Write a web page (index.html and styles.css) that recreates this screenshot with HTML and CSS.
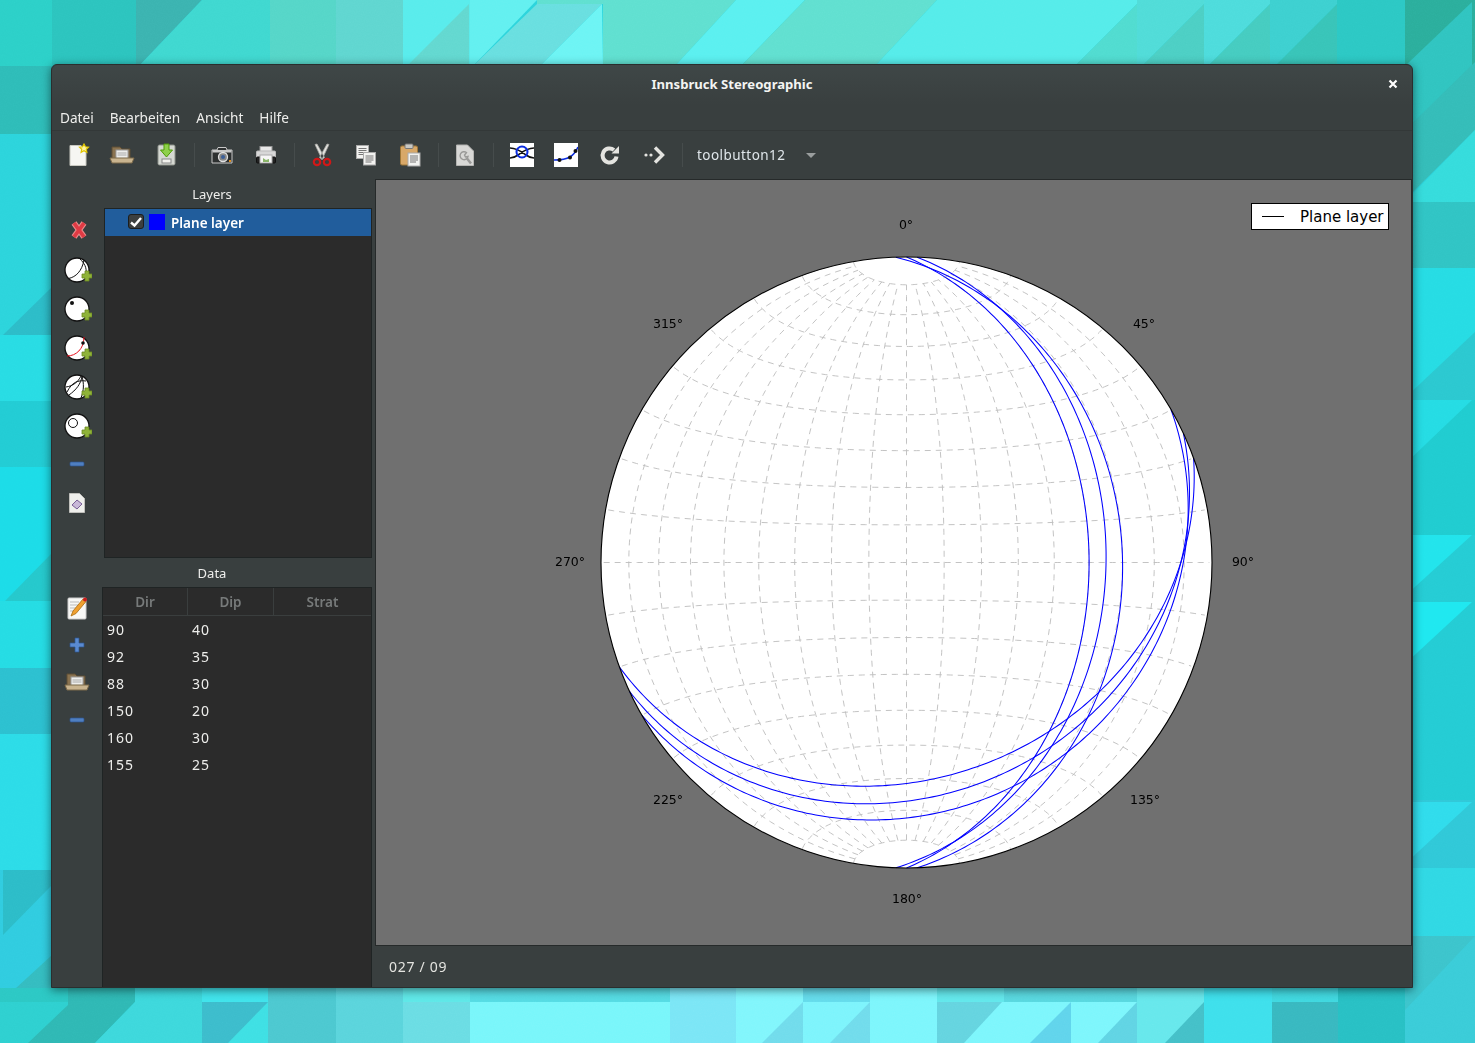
FILE: index.html
```html
<!DOCTYPE html>
<html lang="en">
<head>
    <meta charset="UTF-8">
    <meta name="viewport" content="width=device-width, initial-scale=1.0">
    <title>Innsbruck Stereographic</title>
    <link rel="stylesheet" href="styles.css">
</head>
<body>
    <!-- desktop wallpaper, only the strips around the window are visible -->
    <svg class="wallpaper" viewBox="0 0 1475 1043" width="1475" height="1043">
        <defs>
            <filter id="grain" x="0" y="0" width="100%" height="100%">
                <feTurbulence type="fractalNoise" baseFrequency="0.9" numOctaves="2" seed="4"/>
                <feColorMatrix type="saturate" values="0"/>
            </filter>
        </defs>
        <rect width="1475" height="1043" fill="#2cd4dc"/>
        <!-- top -->
        <polygon fill="#2cc4be" points="0,0 136,0 136,66 0,66"/>
        <polygon fill="#3bb3b0" points="136,0 202,0 139,66 136,66"/>
        <polygon fill="#3fd8d0" points="202,0 270,0 270,66 139,66"/>
        <polygon fill="#55d6c8" points="270,0 336,0 336,66 270,66"/>
        <polygon fill="#5fd6d0" points="336,0 403,0 403,66 336,66"/>
        <polygon fill="#58ecec" points="403,0 470,0 470,66 403,66"/>
        <polygon fill="#62d8d0" points="407,66 469,4 469,66"/>
        <polygon fill="#62f0f0" points="470,0 537,0 473,66 470,66"/>
        <polygon fill="#68dfe0" points="473,66 537,4 602,4 540,66"/>
        <polygon fill="#6cf4f4" points="540,66 602,4 603,66"/>
        <polygon fill="#5fe0d0" points="537,0 736,0 675,66 603,66 603,4 537,4"/>
        <polygon fill="#5af0f0" points="675,66 736,0 805,0 741,66"/>
        <polygon fill="#60e0d0" points="741,66 805,0 937,0 875,66"/>
        <polygon fill="#55ecea" points="875,66 937,0 1137,0 1137,4 1075,66"/>
        <polygon fill="#50dcd0" points="1075,66 1137,4 1137,66"/>
        <polygon fill="#50dcd8" points="1137,0 1204,0 1204,4 1142,66 1137,66"/>
        <polygon fill="#4ccfc4" points="1142,66 1204,4 1204,66"/>
        <polygon fill="#4ddcdc" points="1204,0 1270,0 1270,4 1208,66 1204,66"/>
        <polygon fill="#45ccc0" points="1208,66 1270,4 1270,66"/>
        <polygon fill="#3dd0d0" points="1270,0 1337,0 1337,4 1275,66 1270,66"/>
        <polygon fill="#38c4b8" points="1275,66 1337,4 1337,66"/>
        <polygon fill="#2cc8c4" points="1337,0 1405,0 1405,66 1337,66"/>
        <!-- right -->
        <rect fill="#2bae9c" x="1405" y="0" width="70" height="90"/>
        <polygon fill="#30c4c0" points="1405,66 1472,2 1472,66 1405,130"/>
        <polygon fill="#34bcb8" points="1405,130 1475,62 1475,130 1405,200"/>
        <polygon fill="#35dcdc" points="1405,202 1475,130 1475,202"/>
        <rect fill="#30c4c4" x="1405" y="202" width="70" height="66"/>
        <rect fill="#26dce4" x="1405" y="268" width="70" height="132"/>
        <polygon fill="#2bc8d0" points="1405,398 1475,332 1475,400 1405,400"/>
        <rect fill="#20ccd0" x="1405" y="400" width="70" height="135"/>
        <polygon fill="#25dce4" points="1405,400 1472,400 1405,464"/>
        <rect fill="#25ccd4" x="1405" y="535" width="70" height="67"/>
        <polygon fill="#22e4ec" points="1405,535 1472,535 1405,596"/>
        <rect fill="#24ccd4" x="1405" y="602" width="70" height="198"/>
        <polygon fill="#1fe8f0" points="1405,602 1472,602 1405,664"/>
        <rect fill="#30c8d8" x="1405" y="800" width="70" height="68"/>
        <polygon fill="#30dcec" points="1405,802 1472,802 1405,864"/>
        <rect fill="#30d8e4" x="1405" y="868" width="70" height="68"/>
        <rect fill="#3cc4cc" x="1405" y="936" width="70" height="107"/>
        <polygon fill="#3accd8" points="1405,1010 1475,936 1475,1043 1405,1043"/>
        <!-- left -->
        <rect fill="#2cd0c8" x="0" y="0" width="52" height="66"/>
        <rect fill="#2ebcb8" x="0" y="66" width="52" height="68"/>
        <rect fill="#2cd4dc" x="0" y="134" width="52" height="201"/>
        <polygon fill="#2cbcc8" points="3,335 52,287 52,335"/>
        <rect fill="#28dce4" x="0" y="335" width="52" height="66"/>
        <rect fill="#22ccd4" x="0" y="401" width="52" height="66"/>
        <rect fill="#1cdce8" x="0" y="467" width="52" height="134"/>
        <polygon fill="#25c8cc" points="5,601 52,553 52,601"/>
        <rect fill="#25dce4" x="0" y="601" width="52" height="67"/>
        <rect fill="#2cc0d0" x="0" y="668" width="52" height="66"/>
        <rect fill="#2cdce8" x="0" y="734" width="52" height="136"/>
        <rect fill="#30cce0" x="0" y="870" width="52" height="132"/>
        <polygon fill="#2cbcc8" points="3,870 52,870 52,885 3,935"/>
        <polygon fill="#34bcc0" points="3,1000 52,955 68,955 68,1002"/>
        <!-- bottom -->
        <rect fill="#2cc8c4" x="0" y="988" width="68" height="14"/>
        <rect fill="#2ed0d0" x="0" y="1002" width="68" height="41"/>
        <rect fill="#2ed0d0" x="68" y="1002" width="40" height="41"/>
        <polygon fill="#2fb8b4" points="28,1043 68,1005 68,988 135,988 135,1002 95,1043"/>
        <polygon fill="#3dd8dc" points="95,1043 135,1002 135,988 202,988 202,1043"/>
        <rect fill="#40e4ec" x="202" y="988" width="66" height="14"/>
        <rect fill="#3cbccc" x="202" y="1002" width="66" height="41"/>
        <polygon fill="#3ee0e4" points="228,1043 268,1002 268,1043"/>
        <rect fill="#4cc8d0" x="268" y="988" width="68" height="55"/>
        <rect fill="#5ad4dc" x="336" y="988" width="67" height="55"/>
        <rect fill="#6adde4" x="403" y="1002" width="67" height="41"/>
        <rect fill="#5ee8e8" x="403" y="988" width="67" height="14"/>
        <rect fill="#55dce4" x="470" y="988" width="200" height="14"/>
        <rect fill="#78f6fa" x="470" y="1002" width="200" height="41"/>
        <rect fill="#7ae6f6" x="670" y="988" width="66" height="55"/>
        <rect fill="#80f6fc" x="736" y="988" width="67" height="55"/>
        <polygon fill="#70dcec" points="762,1043 803,1002 803,1043"/>
        <rect fill="#64dcec" x="803" y="988" width="67" height="14"/>
        <rect fill="#7cf4fc" x="803" y="1002" width="67" height="41"/>
        <polygon fill="#70dcec" points="830,1043 870,1002 870,1043"/>
        <rect fill="#7cf6fc" x="870" y="988" width="67" height="55"/>
        <rect fill="#62e8ec" x="937" y="988" width="67" height="14"/>
        <rect fill="#64d4e0" x="937" y="1002" width="67" height="41"/>
        <rect fill="#58d8e0" x="1004" y="988" width="133" height="14"/>
        <polygon fill="#7cf6fc" points="964,1043 1002,1002 1137,1002 1137,1043"/>
        <polygon fill="#60d4ec" points="1030,1043 1071,1002 1071,1043"/>
        <polygon fill="#60d4e4" points="1098,1043 1137,1002 1137,1043"/>
        <rect fill="#66e8ec" x="1137" y="988" width="67" height="55"/>
        <polygon fill="#44c0c8" points="1165,1043 1204,1002 1204,1043"/>
        <rect fill="#3ee0ec" x="1204" y="988" width="68" height="55"/>
        <rect fill="#38b8c0" x="1272" y="1002" width="66" height="41"/>
        <rect fill="#40d8e0" x="1272" y="988" width="66" height="14"/>
        <rect fill="#28c0c4" x="1338" y="988" width="67" height="55"/>
        <rect class="grain" width="1475" height="1043" filter="url(#grain)"/>
    </svg>

    <svg class="defs" width="0" height="0">
        <defs>
            <symbol id="plus-badge" viewBox="0 0 28 28">
                <path d="M18 17h3v-3h4v3h3v4h-3v3h-4v-3h-3z" fill="#8fb339" stroke="#6d8a22" stroke-width="0.8"/>
            </symbol>
            <symbol id="folder" viewBox="0 0 26 24">
                <path d="M3 4h8l2 2h8v10H3z" fill="#8a7350" stroke="#5f4e34"/>
                <rect x="7" y="7" width="12" height="9" fill="#eeeeec" stroke="#999"/>
                <path d="M8.500 10h9M8.500 12h9" stroke="#aaa"/>
                <path d="M1 15h24l-2 5H3z" fill="#c9b48f" stroke="#7d6a4a"/>
            </symbol>
            <symbol id="minus" viewBox="0 0 20 20">
                <rect x="3" y="8" width="14" height="4" rx="1" fill="#4f7fc0" stroke="#2c5590" stroke-width="0.7"/>
            </symbol>
        </defs>
    </svg>

    <div class="window">
        <div class="titlebar">
            <span class="title">Innsbruck Stereographic</span>
            <svg class="close" width="10" height="10" viewBox="0 0 10 10"><path d="M1.500 1.500l7 7M8.500 1.500l-7 7" stroke="#fff" stroke-width="2.200"/></svg>
        </div>
        <div class="menubar">
            <span>Datei</span>
            <span>Bearbeiten</span>
            <span>Ansicht</span>
            <span>Hilfe</span>
        </div>
        <div class="toolbar">
            <div class="tool"><svg width="24" height="24" viewBox="0 0 24 24">
                <path d="M4 2.500h11l5 5v15H4z" fill="#f6f6f2" stroke="#c8c8c0"/>
                <path d="M18 1l1.500 2.800 3 .4-2.200 2.100.6 3-2.900-1.500-2.900 1.500.6-3-2.200-2.100 3-.4z" fill="#fff4a0" stroke="#e0c400" stroke-width="1.200"/>
            </svg></div>
            <div class="tool"><svg width="26" height="24" viewBox="0 0 26 24"><use href="#folder"/></svg></div>
            <div class="tool"><svg width="24" height="24" viewBox="0 0 24 24">
                <rect x="4" y="2" width="17" height="20" rx="1.500" fill="#d5d8d2" stroke="#8d918a"/>
                <rect x="8" y="16" width="9" height="4" fill="#f2f2ee" stroke="#888"/>
                <path d="M10 1h5v6h3.500l-6 7-6-7H10z" fill="#8ed04a" stroke="#4e9a06"/>
            </svg></div>
            <div class="sep"></div>
            <div class="tool"><svg width="24" height="24" viewBox="0 0 24 24">
                <path d="M2 7h5l1-2.500h8l1 2.500h5v13H2z" fill="#2e3131" stroke="#c8c8c8"/>
                <rect x="2.500" y="7" width="19" height="2.500" fill="#c8c8c8"/>
                <circle cx="13" cy="14" r="4.500" fill="#888" stroke="#e2e2e2" stroke-width="1.300"/>
                <circle cx="13" cy="14" r="2" fill="#3b5f99"/>
                <rect x="19" y="17" width="2" height="2" fill="#e09020"/>
            </svg></div>
            <div class="tool"><svg width="24" height="24" viewBox="0 0 24 24">
                <rect x="6" y="3.500" width="12" height="5" fill="#e8e8e8" stroke="#999"/>
                <rect x="2.500" y="8" width="19" height="8" rx="1" fill="#d8d8d8" stroke="#bbb"/>
                <rect x="2.500" y="14" width="19" height="6" rx="1" fill="#222" stroke="#111"/>
                <rect x="6" y="12" width="12" height="8" fill="#f6f6f6" stroke="#aaa"/>
                <path d="M9 15l3 2 3-1v3H9z" fill="#8ab56a"/>
            </svg></div>
            <div class="sep"></div>
            <div class="tool"><svg width="20" height="24" viewBox="0 0 20 24">
                <path d="M3 1.500L5 1l7.500 13.500-2.500 2zM17 1.500L15 1 7.500 14.500l2.500 2z" fill="#e2e2de" stroke="#a8a8a4" stroke-width="0.800"/>
                <circle cx="5" cy="19" r="3.200" fill="none" stroke="#d01818" stroke-width="2.200"/>
                <circle cx="15" cy="19" r="3.200" fill="none" stroke="#d01818" stroke-width="2.200"/>
            </svg></div>
            <div class="tool"><svg width="22" height="22" viewBox="0 0 22 22">
                <rect x="1.500" y="1.500" width="12" height="13" fill="#f2f2f0" stroke="#aaa"/>
                <path d="M3.500 4.500h8M3.500 6.500h8M3.500 8.500h8M3.500 10.500h6" stroke="#777"/>
                <rect x="8.500" y="8.500" width="12" height="12.500" fill="#f2f2f0" stroke="#aaa"/>
                <path d="M10.500 12h8M10.500 14h8M10.500 16h8M10.500 18h6" stroke="#777"/>
            </svg></div>
            <div class="tool"><svg width="22" height="24" viewBox="0 0 22 24">
                <rect x="1.500" y="3" width="17" height="19" rx="1.500" fill="#d8a868" stroke="#a07838"/>
                <rect x="6" y="1" width="8" height="4.500" rx="1" fill="#c8c8c4" stroke="#777"/>
                <rect x="9" y="10" width="12" height="13" fill="#f2f2f0" stroke="#aaa"/>
                <path d="M11 13h8M11 15h8M11 17h8M11 19h6" stroke="#777"/>
            </svg></div>
            <div class="sep sep-short"></div>
            <div class="tool"><svg width="22" height="24" viewBox="0 0 22 24">
                <path d="M2.500 2h11l6 6v14.500h-17z" fill="#d8d8d6" stroke="#b4b4b2"/>
                <path d="M12.500 9.500a4 4 0 1 0 1.500 4l-2.500 .5-1-2z" fill="none" stroke="#9a9a98" stroke-width="1.400"/>
                <path d="M13 15.500l4 5" stroke="#9a9a98" stroke-width="2.500"/>
            </svg></div>
            <div class="sep sep-wide"></div>
            <div class="tool"><svg width="24" height="24" viewBox="0 0 24 24">
                <rect width="24" height="24" fill="#fff"/>
                <path d="M0 5c7 0 12 4 16 7s6 3 8 3M0 15c2 0 4 0 8-3s9-7 16-7" fill="none" stroke="#111" stroke-width="1.700"/>
                <circle cx="12" cy="9" r="5.500" fill="none" stroke="#0a2ce0" stroke-width="2"/>
            </svg></div>
            <div class="tool"><svg width="24" height="24" viewBox="0 0 24 24">
                <rect width="24" height="24" fill="#fff"/>
                <path d="M0 17c6 0 11 0 16-3s6-6 8-10" fill="none" stroke="#0a2ce0" stroke-width="1.600"/>
                <circle cx="5.500" cy="17" r="2" fill="#111"/>
                <circle cx="16" cy="14.500" r="2" fill="#111"/>
                <circle cx="21.500" cy="8" r="2" fill="#111"/>
            </svg></div>
            <div class="tool"><svg width="22" height="22" viewBox="0 0 22 22">
                <path d="M17.500 12.500a7 7 0 1 1-2.500-6.500" fill="none" stroke="#e4e4e0" stroke-width="4"/>
                <path d="M12.500 9.500h7.500V2z" fill="#e4e4e0"/>
            </svg></div>
            <div class="tool"><svg width="22" height="18" viewBox="0 0 22 18">
                <circle cx="3" cy="9" r="1.600" fill="#e4e4e0"/>
                <circle cx="8" cy="9" r="1.600" fill="#e4e4e0"/>
                <path d="M12 1.500L19.500 9 12 16.500" fill="none" stroke="#e4e4e0" stroke-width="3.400"/>
            </svg></div>
            <div class="sep"></div>
            <div class="tool-combo">
                <span>toolbutton12</span>
                <i class="caret"></i>
            </div>
        </div>

        <div class="main">
            <div class="dock">
                <div class="dock-title">Layers</div>
                <div class="dock-row layers-row">
                    <div class="side-tools layer-tools">
                        <div class="side-btn"><svg class="remove" width="20" height="20" viewBox="0 0 20 20">
                            <path d="M5 3l10 14M15 3L5 17" stroke="#e88a8a" stroke-width="6"/>
                            <path d="M5 3l10 14M15 3L5 17" stroke="#e03a44" stroke-width="3.800"/>
                        </svg></div>
                        <div class="side-btn"><svg class="net" width="28" height="28" viewBox="0 0 28 28">
                            <circle cx="13" cy="13" r="12" fill="#fff" stroke="#111" stroke-width="1.300"/>
                            <path d="M4.500 21.500C12 20 18 14 20 3M16 2c4 4 7 8 6 15" fill="none" stroke="#111"/>
                            <use href="#plus-badge" width="28" height="28"/>
                        </svg></div>
                        <div class="side-btn"><svg class="net" width="28" height="28" viewBox="0 0 28 28">
                            <circle cx="13" cy="13" r="12" fill="#fff" stroke="#111" stroke-width="1.300"/>
                            <circle cx="8" cy="7" r="2" fill="#111"/>
                            <use href="#plus-badge" width="28" height="28"/>
                        </svg></div>
                        <div class="side-btn"><svg class="net" width="28" height="28" viewBox="0 0 28 28">
                            <circle cx="13" cy="13" r="12" fill="#fff" stroke="#111" stroke-width="1.300"/>
                            <path d="M3 21C12 21 20 14 20 2" fill="none" stroke="#e8101c"/>
                            <circle cx="19" cy="8" r="1.800" fill="#111"/>
                            <use href="#plus-badge" width="28" height="28"/>
                        </svg></div>
                        <div class="side-btn"><svg class="net" width="28" height="28" viewBox="0 0 28 28">
                            <circle cx="13" cy="13" r="12" fill="#fff" stroke="#111" stroke-width="1.300"/>
                            <path d="M2 13C9 12 14 8 17 2M5 21C12 16 17 10 18 2M3 18C8 8 14 6 22 7M18 2c2 8 2 14-1 22" fill="none" stroke="#111"/>
                            <use href="#plus-badge" width="28" height="28"/>
                        </svg></div>
                        <div class="side-btn"><svg class="net" width="28" height="28" viewBox="0 0 28 28">
                            <circle cx="13" cy="13" r="12" fill="#fff" stroke="#111" stroke-width="1.300"/>
                            <circle cx="9" cy="10" r="4.500" fill="none" stroke="#111"/>
                            <use href="#plus-badge" width="28" height="28"/>
                        </svg></div>
                        <div class="side-btn"><svg width="20" height="20" viewBox="0 0 20 20"><use href="#minus"/></svg></div>
                        <div class="side-btn"><svg width="20" height="22" viewBox="0 0 20 22">
                            <path d="M2.500 1.500h10l5 5v14h-15z" fill="#efefec" stroke="#c0c0bc"/>
                            <path d="M10 8l5 4-5 5-5-4z" fill="#c9b8d8" stroke="#7a5f96"/>
                        </svg></div>
                    </div>
                    <div class="layer-list">
                        <div class="layer-row">
                            <span class="check"><svg width="14" height="12" viewBox="0 0 14 12"><path d="M2 6.500l3.500 3L12 2" fill="none" stroke="#fff" stroke-width="2.400"/></svg></span>
                            <span class="swatch"></span>
                            <span class="layer-name">Plane layer</span>
                        </div>
                    </div>
                </div>
                <div class="dock-title">Data</div>
                <div class="dock-row data-row">
                    <div class="side-tools data-tools">
                        <div class="side-btn"><svg width="24" height="24" viewBox="0 0 24 24">
                            <rect x="3" y="2" width="18" height="21" rx="1" fill="#f8f8f6" stroke="#ccc"/>
                            <path d="M5 6h9M5 9h8M5 12h6M5 15h4" stroke="#bbb"/>
                            <path d="M6 20l2-5L18 3l3 2.500L11 17.500z" fill="#f0a030" stroke="#a86c10" stroke-width="0.800"/>
                            <circle cx="20" cy="3.500" r="2" fill="#c81c1c"/>
                        </svg></div>
                        <div class="side-btn"><svg width="20" height="20" viewBox="0 0 20 20">
                            <path d="M8 3h4v5h5v4h-5v5H8v-5H3V8h5z" fill="#5a8ad0" stroke="#2c5590" stroke-width="0.700"/>
                        </svg></div>
                        <div class="side-btn"><svg width="26" height="24" viewBox="0 0 26 24"><use href="#folder"/></svg></div>
                        <div class="side-btn"><svg width="20" height="20" viewBox="0 0 20 20"><use href="#minus"/></svg></div>
                    </div>
                    <div class="data-table">
                        <div class="data-head">
                            <span>Dir</span>
                            <span>Dip</span>
                            <span>Strat</span>
                        </div>
                        <div class="data-line"><span>90</span><span>40</span></div>
                        <div class="data-line"><span>92</span><span>35</span></div>
                        <div class="data-line"><span>88</span><span>30</span></div>
                        <div class="data-line"><span>150</span><span>20</span></div>
                        <div class="data-line"><span>160</span><span>30</span></div>
                        <div class="data-line"><span>155</span><span>25</span></div>
                    </div>
                </div>
            </div>

            <div class="plot-side">
                <div class="plot">
                    <svg id="net" class="net-plot" viewBox="376 180 1035 765" width="1035" height="765">
                        <text class="tick" x="906" y="229">0°</text>
                        <text class="tick" x="1144" y="328">45°</text>
                        <text class="tick" x="1243" y="566">90°</text>
                        <text class="tick" x="1145" y="804">135°</text>
                        <text class="tick" x="907" y="903">180°</text>
                        <text class="tick" x="668" y="804">225°</text>
                        <text class="tick" x="570" y="566">270°</text>
                        <text class="tick" x="668" y="328">315°</text>
                    </svg>
                    <div class="legend">
                        <span class="legend-line"></span>
                        <span>Plane layer</span>
                    </div>
                </div>
                <div class="statusbar">027 / 09</div>
            </div>
        </div>
    </div>

    <script src="stereonet.js"></script>
</body>
</html>
```

FILE: styles.css
```css
* {
    box-sizing: border-box;
}

html, body {
    margin: 0;
    padding: 0;
    width: 1475px;
    height: 1043px;
    overflow: hidden;
}

body {
    position: relative;
    font-family: "Noto Sans", sans-serif;
    font-size: 14px;
    color: #eeeeec;
    background-color: #2cd4dc;
}

.wallpaper {
    position: absolute;
    left: 0;
    top: 0;
    display: block;
}

.grain {
    opacity: 0.09;
    mix-blend-mode: overlay;
}

.defs {
    position: absolute;
}

.window {
    position: absolute;
    left: 51px;
    top: 64px;
    width: 1362px;
    height: 924px;
    display: flex;
    flex-direction: column;
    background-color: #393f3f;
    border: 1px solid #2a2e2e;
    border-radius: 6px 6px 0 0;
    box-shadow: 0 2px 10px rgba(0, 0, 0, 0.5);
}

.titlebar {
    position: relative;
    height: 40px;
    flex: none;
    display: flex;
    align-items: center;
    justify-content: center;
    padding-bottom: 2px;
    background: linear-gradient(#3f4747, #393f3f);
    border-radius: 6px 6px 0 0;
}

.title {
    font-weight: 700;
    font-size: 13.1px;
    color: #f4f4f2;
}

.close {
    position: absolute;
    right: 14px;
    top: 14px;
}

.menubar {
    height: 26px;
    flex: none;
    display: flex;
    align-items: center;
    gap: 16px;
    padding-left: 8px;
    font-size: 13.65px;
    border-bottom: 1px solid #333838;
}

.toolbar {
    height: 48px;
    flex: none;
    display: flex;
    align-items: center;
    padding-left: 4px;
}

.tool {
    width: 44px;
    height: 44px;
    display: flex;
    align-items: center;
    justify-content: center;
}

.sep {
    width: 12px;
    height: 24px;
    flex: none;
    position: relative;
}

.sep::after {
    content: "";
    position: absolute;
    left: 6px;
    top: 0;
    width: 1px;
    height: 24px;
    background-color: #464c4c;
}

.sep-short {
    width: 11px;
}

.sep-wide {
    width: 13px;
}

.tool-combo {
    display: flex;
    align-items: center;
    padding-left: 9px;
    font-size: 13.5px;
    letter-spacing: 0.45px;
    color: #dfe6ea;
}

.caret {
    margin-left: 21px;
    margin-top: 1px;
    border-left: 5px solid transparent;
    border-right: 5px solid transparent;
    border-top: 5px solid #9a9e9e;
}

.main {
    flex: 1;
    display: flex;
    min-height: 0;
}

.dock {
    width: 320px;
    flex: none;
    display: flex;
    flex-direction: column;
}

.dock-title {
    height: 29px;
    flex: none;
    display: flex;
    align-items: center;
    justify-content: center;
    font-size: 13px;
}

.dock-row {
    display: flex;
}

.layers-row {
    height: 350px;
}

.data-row {
    flex: 1;
    min-height: 0;
}

.side-tools {
    flex: none;
    display: flex;
    flex-direction: column;
    align-items: center;
}

.layer-tools {
    width: 52px;
    padding-top: 2px;
    padding-right: 2px;
}

.data-tools {
    width: 50px;
    padding-top: 2px;
}

.side-btn {
    height: 39px;
    display: flex;
    align-items: center;
    justify-content: center;
}

.data-tools .side-btn {
    height: 37.3px;
}

.net {
    margin: 4px 0 0 2px;
}

.remove {
    margin-left: 4px;
}

.layer-list {
    flex: 1;
    background-color: #2b2b2b;
    border: 1px solid #1f2424;
}

.layer-row {
    height: 27px;
    display: flex;
    align-items: center;
    padding-left: 23px;
    background-color: #215d9c;
}

.check {
    width: 16px;
    height: 15px;
    display: flex;
    align-items: center;
    justify-content: center;
    background-color: #3c3f3f;
    border: 1px solid #1c1e1e;
    border-radius: 3px;
    margin-bottom: 2px;
}

.swatch {
    width: 16px;
    height: 16px;
    margin-left: 5px;
    margin-bottom: 1px;
    background-color: #0000ff;
}

.layer-name {
    margin-left: 6px;
    padding-top: 1px;
    font-size: 13.5px;
    font-weight: 600;
    color: #fff;
}

.data-table {
    flex: 1;
    background-color: #2b2b2b;
    border: 1px solid #1f2424;
    border-bottom: 0;
}

.data-head {
    height: 28px;
    display: grid;
    grid-template-columns: 85px 86px 1fr;
    border-bottom: 1px solid #3a3e3e;
    font-size: 13.5px;
    font-weight: 600;
    color: #777a7a;
}

.data-head span {
    display: flex;
    align-items: center;
    justify-content: center;
    border-right: 1px solid #3a3e3e;
}

.data-head span:last-child {
    border-right: 0;
}

.data-line {
    height: 27px;
    display: grid;
    grid-template-columns: 85px 86px;
    align-items: center;
    font-size: 14px;
    letter-spacing: 1px;
}

.data-line span {
    padding-left: 4px;
}

.plot-side {
    flex: 1;
    min-width: 0;
    display: flex;
    flex-direction: column;
    padding-left: 3px;
}

.plot {
    position: relative;
    height: 767px;
    flex: none;
    background-color: #707070;
    border: 1px solid #262a2a;
}

.net-plot {
    display: block;
    position: absolute;
    left: 0;
    top: 0;
}

.tick {
    font-family: "DejaVu Sans", sans-serif;
    font-size: 12.5px;
    fill: #000;
    text-anchor: middle;
}

.legend {
    position: absolute;
    left: 875px;
    top: 23px;
    width: 138px;
    height: 27px;
    display: flex;
    align-items: center;
    gap: 16px;
    padding-left: 10px;
    background-color: #fff;
    border: 1px solid #000;
    font-family: "DejaVu Sans", sans-serif;
    font-size: 15px;
    color: #000;
}

.legend-line {
    width: 22px;
    height: 1px;
    background-color: #000;
}

.statusbar {
    flex: 1;
    display: flex;
    align-items: center;
    padding-left: 14px;
    font-size: 14px;
    letter-spacing: 0.7px;
    color: #e4e4e0;
}
```

FILE: stereonet.js
```js
// schmidt net (equal area, lower hemisphere), same numbers as the data table
const CX = 906.5;
const CY = 562.5;
const R = 305.5;
const SVG_NS = 'http://www.w3.org/2000/svg';

const planes = [
    [90, 40],
    [92, 35],
    [88, 30],
    [150, 20],
    [160, 30],
    [155, 25]
];

const net = document.getElementById('net');
const rad = deg => deg * Math.PI / 180;

function addPath(points, attrs) {
    const path = document.createElementNS(SVG_NS, 'path');
    const d = points.map((p, i) => (i ? 'L' : 'M') + p[0].toFixed(2) + ' ' + p[1].toFixed(2)).join(' ');
    path.setAttribute('d', d);
    path.setAttribute('fill', 'none');
    Object.keys(attrs).forEach(key => path.setAttribute(key, attrs[key]));
    net.appendChild(path);
}

// grid point, lon/lat with the poles at north and south of the net
function gridPoint(lon, lat) {
    const k = Math.sqrt(2 / (1 + Math.cos(rad(lat)) * Math.cos(rad(lon))));
    const s = R / Math.SQRT2;
    return [
        CX + s * k * Math.cos(rad(lat)) * Math.sin(rad(lon)),
        CY - s * k * Math.sin(rad(lat))
    ];
}

// white disc first, grid and planes go on top
const disc = document.createElementNS(SVG_NS, 'circle');
disc.setAttribute('cx', CX);
disc.setAttribute('cy', CY);
disc.setAttribute('r', R);
disc.setAttribute('fill', '#fff');
net.appendChild(disc);

const gridStyle = { stroke: '#bcbcbc', 'stroke-width': 0.9, 'stroke-dasharray': '6 5' };

for (let lat = -80; lat <= 80; lat += 10) {
    const line = [];
    for (let lon = -89; lon <= 89; lon += 2) {
        line.push(gridPoint(lon, lat));
    }
    addPath(line, gridStyle);
}

for (let lon = -80; lon <= 80; lon += 10) {
    const line = [];
    for (let lat = -80; lat <= 80; lat += 2) {
        line.push(gridPoint(lon, lat));
    }
    addPath(line, gridStyle);
}

planes.forEach(plane => {
    const dir = rad(plane[0]);
    const dip = rad(plane[1]);
    const strike = dir - Math.PI / 2;
    const line = [];

    for (let t = 0; t <= 180; t += 1) {
        const c = Math.cos(rad(t));
        const s = Math.sin(rad(t));
        const east = Math.sin(strike) * c + Math.sin(dir) * Math.cos(dip) * s;
        const north = Math.cos(strike) * c + Math.cos(dir) * Math.cos(dip) * s;
        const down = Math.sin(dip) * s;
        const r = Math.SQRT2 * R * Math.sin(Math.acos(Math.min(down, 1)) / 2);
        const h = Math.hypot(east, north) || 1;
        line.push([CX + r * east / h, CY - r * north / h]);
    }
    addPath(line, { stroke: '#0000ff', 'stroke-width': 1.05 });
});

// rim last
const rim = document.createElementNS(SVG_NS, 'circle');
rim.setAttribute('cx', CX);
rim.setAttribute('cy', CY);
rim.setAttribute('r', R);
rim.setAttribute('fill', 'none');
rim.setAttribute('stroke', '#000');
rim.setAttribute('stroke-width', 1.1);
net.appendChild(rim);
```
